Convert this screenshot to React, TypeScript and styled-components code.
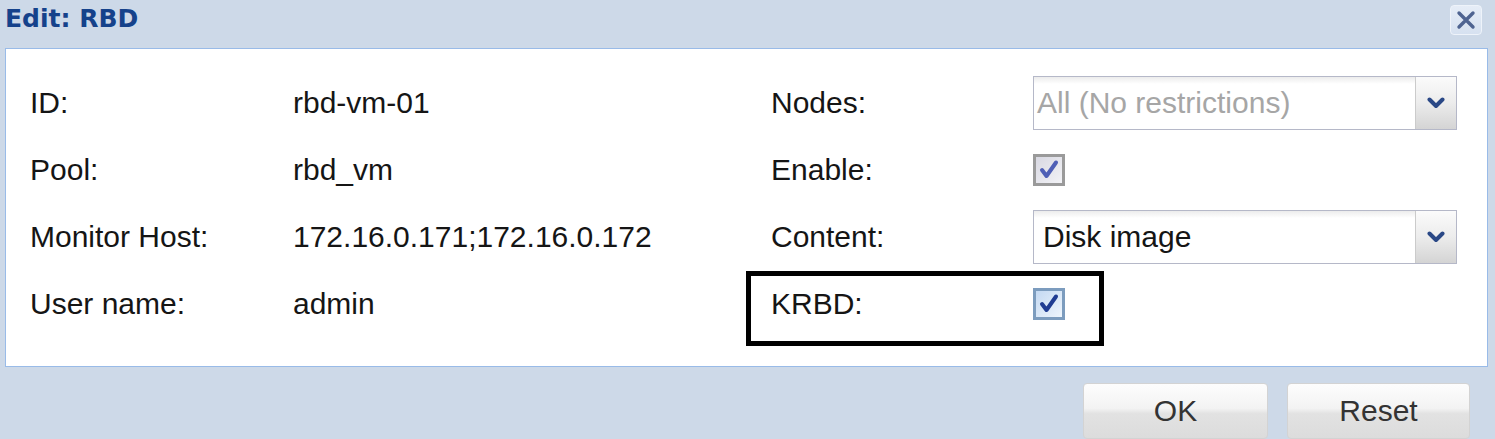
import React from "react";
import styled, { createGlobalStyle } from "styled-components";

const GlobalStyle = createGlobalStyle`
  html, body {
    margin: 0;
    padding: 0;
    background: #cdd9e8;
    overflow: hidden;
  }
  * { box-sizing: border-box; }
`;

const Window = styled.div`
  width: 1495px;
  height: 439px;
  display: flex;
  flex-direction: column;
  background: #cdd9e8;
  font-family: "Liberation Sans", Arial, sans-serif;
  color: #151515;
`;

const Header = styled.div`
  height: 49px;
  display: flex;
  align-items: flex-start;
  justify-content: space-between;
  padding: 4px 13px 0 5px;
`;

const Title = styled.div`
  font-family: "DejaVu Sans", Verdana, sans-serif;
  font-size: 25px;
  line-height: 30px;
  font-weight: bold;
  color: #15428b;
`;

const CloseButton = styled.div`
  width: 32px;
  height: 30px;
  margin-top: 1px;
  border: 1px solid #eef3fa;
  border-radius: 4px;
  background: linear-gradient(to bottom, #e6edf7, #d6e1f0);
  display: flex;
  align-items: center;
  justify-content: center;
`;

const Body = styled.div`
  height: 323px;
  margin: 0 7px 0 5px;
  background: #ffffff;
  border: 1px solid #99bbe8;
  padding: 27px 0 0 24px;
`;

const FormGrid = styled.div`
  display: grid;
  grid-template-columns: 263px 478px 262px 424px;
  grid-auto-rows: 54px;
  row-gap: 13px;
  font-size: 30px;
`;

const Label = styled.div<{ $marked?: boolean }>`
  display: flex;
  align-items: center;
  white-space: nowrap;
  position: relative;
  color: #151515;
  ${(p) =>
    p.$marked &&
    `
    &::before {
      content: "";
      position: absolute;
      left: -25px;
      top: -6px;
      width: 348px;
      height: 65px;
      border: 5px solid #000;
    }
  `}
`;

const Value = styled.div`
  display: flex;
  align-items: center;
  white-space: nowrap;
  color: #151515;
`;

const FieldCell = styled.div`
  display: flex;
  align-items: center;
`;

const Combo = styled.div`
  width: 424px;
  height: 54px;
  display: flex;
  border: 1px solid #b5b8c8;
  background: linear-gradient(to bottom, #ececec 0px, #ffffff 7px, #ffffff 100%);
`;

const ComboText = styled.div<{ $empty?: boolean }>`
  flex: 1;
  display: flex;
  align-items: center;
  padding-left: ${(p) => (p.$empty ? "3px" : "9px")};
  font-size: 30px;
  color: ${(p) => (p.$empty ? "#a6a6a6" : "#151515")};
  white-space: nowrap;
  overflow: hidden;
`;

const Trigger = styled.div`
  width: 41px;
  border-left: 1px solid #cbcbcb;
  background: linear-gradient(to bottom, #fbfbfb 0%, #ececec 50%, #d4d4d4 100%);
  display: flex;
  align-items: center;
  justify-content: center;
`;

const CheckBox = styled.div<{ $disabled?: boolean }>`
  width: 32px;
  height: 32px;
  border: 3px solid ${(p) => (p.$disabled ? "#9a9a9a" : "#7c9cbe")};
  background: ${(p) =>
    p.$disabled
      ? "linear-gradient(to bottom right, #d8d8e2, #f2f2f6)"
      : "linear-gradient(to bottom right, #c4d9f2, #eef5fc)"};
  display: flex;
  align-items: center;
  justify-content: center;
`;

const Footer = styled.div`
  flex: 1;
  display: flex;
  justify-content: flex-end;
  align-items: flex-start;
  gap: 19px;
  padding: 16px 25px 0 0;
`;

const Button = styled.div<{ $w: number }>`
  width: ${(p) => p.$w}px;
  height: 56px;
  border: 1px solid #d3d3d3;
  border-radius: 4px;
  background: linear-gradient(
    to bottom,
    #fdfdfd 0%,
    #f3f3f3 45%,
    #e2e2e2 55%,
    #dcdcdc 100%
  );
  display: flex;
  align-items: center;
  justify-content: center;
  font-size: 30px;
  color: #333;
`;

const Chevron = () => (
  <svg width="18" height="12" viewBox="0 0 18 12">
    <path d="M2.5 2.5 L9 9 L15.5 2.5" fill="none" stroke="#2a4886" strokeWidth="4" strokeLinecap="round" strokeLinejoin="round" />
  </svg>
);

const Check = ({ color }: { color: string }) => (
  <svg width="22" height="22" viewBox="0 0 22 22">
    <path d="M4 11 L8.5 17 L18 3.5" fill="none" stroke={color} strokeWidth="4" strokeLinecap="round" strokeLinejoin="round" />
  </svg>
);

const CloseIcon = () => (
  <svg width="20" height="20" viewBox="0 0 20 20">
    <path d="M3 3 L17 17 M17 3 L3 17" fill="none" stroke="#4f6491" strokeWidth="3.4" strokeLinecap="round" />
  </svg>
);

export default function App() {
  return (
    <>
      <GlobalStyle />
      <Window>
        <Header>
          <Title>Edit: RBD</Title>
          <CloseButton>
            <CloseIcon />
          </CloseButton>
        </Header>
        <Body>
          <FormGrid>
            <Label>ID:</Label>
            <Value>rbd-vm-01</Value>
            <Label>Nodes:</Label>
            <FieldCell>
              <Combo>
                <ComboText $empty>All (No restrictions)</ComboText>
                <Trigger>
                  <Chevron />
                </Trigger>
              </Combo>
            </FieldCell>

            <Label>Pool:</Label>
            <Value>rbd_vm</Value>
            <Label>Enable:</Label>
            <FieldCell>
              <CheckBox $disabled>
                <Check color="#4f5fb6" />
              </CheckBox>
            </FieldCell>

            <Label>Monitor Host:</Label>
            <Value>172.16.0.171;172.16.0.172</Value>
            <Label>Content:</Label>
            <FieldCell>
              <Combo>
                <ComboText>Disk image</ComboText>
                <Trigger>
                  <Chevron />
                </Trigger>
              </Combo>
            </FieldCell>

            <Label>User name:</Label>
            <Value>admin</Value>
            <Label $marked>KRBD:</Label>
            <FieldCell>
              <CheckBox>
                <Check color="#1f3c92" />
              </CheckBox>
            </FieldCell>
          </FormGrid>
        </Body>
        <Footer>
          <Button $w={185}>OK</Button>
          <Button $w={183}>Reset</Button>
        </Footer>
      </Window>
    </>
  );
}
